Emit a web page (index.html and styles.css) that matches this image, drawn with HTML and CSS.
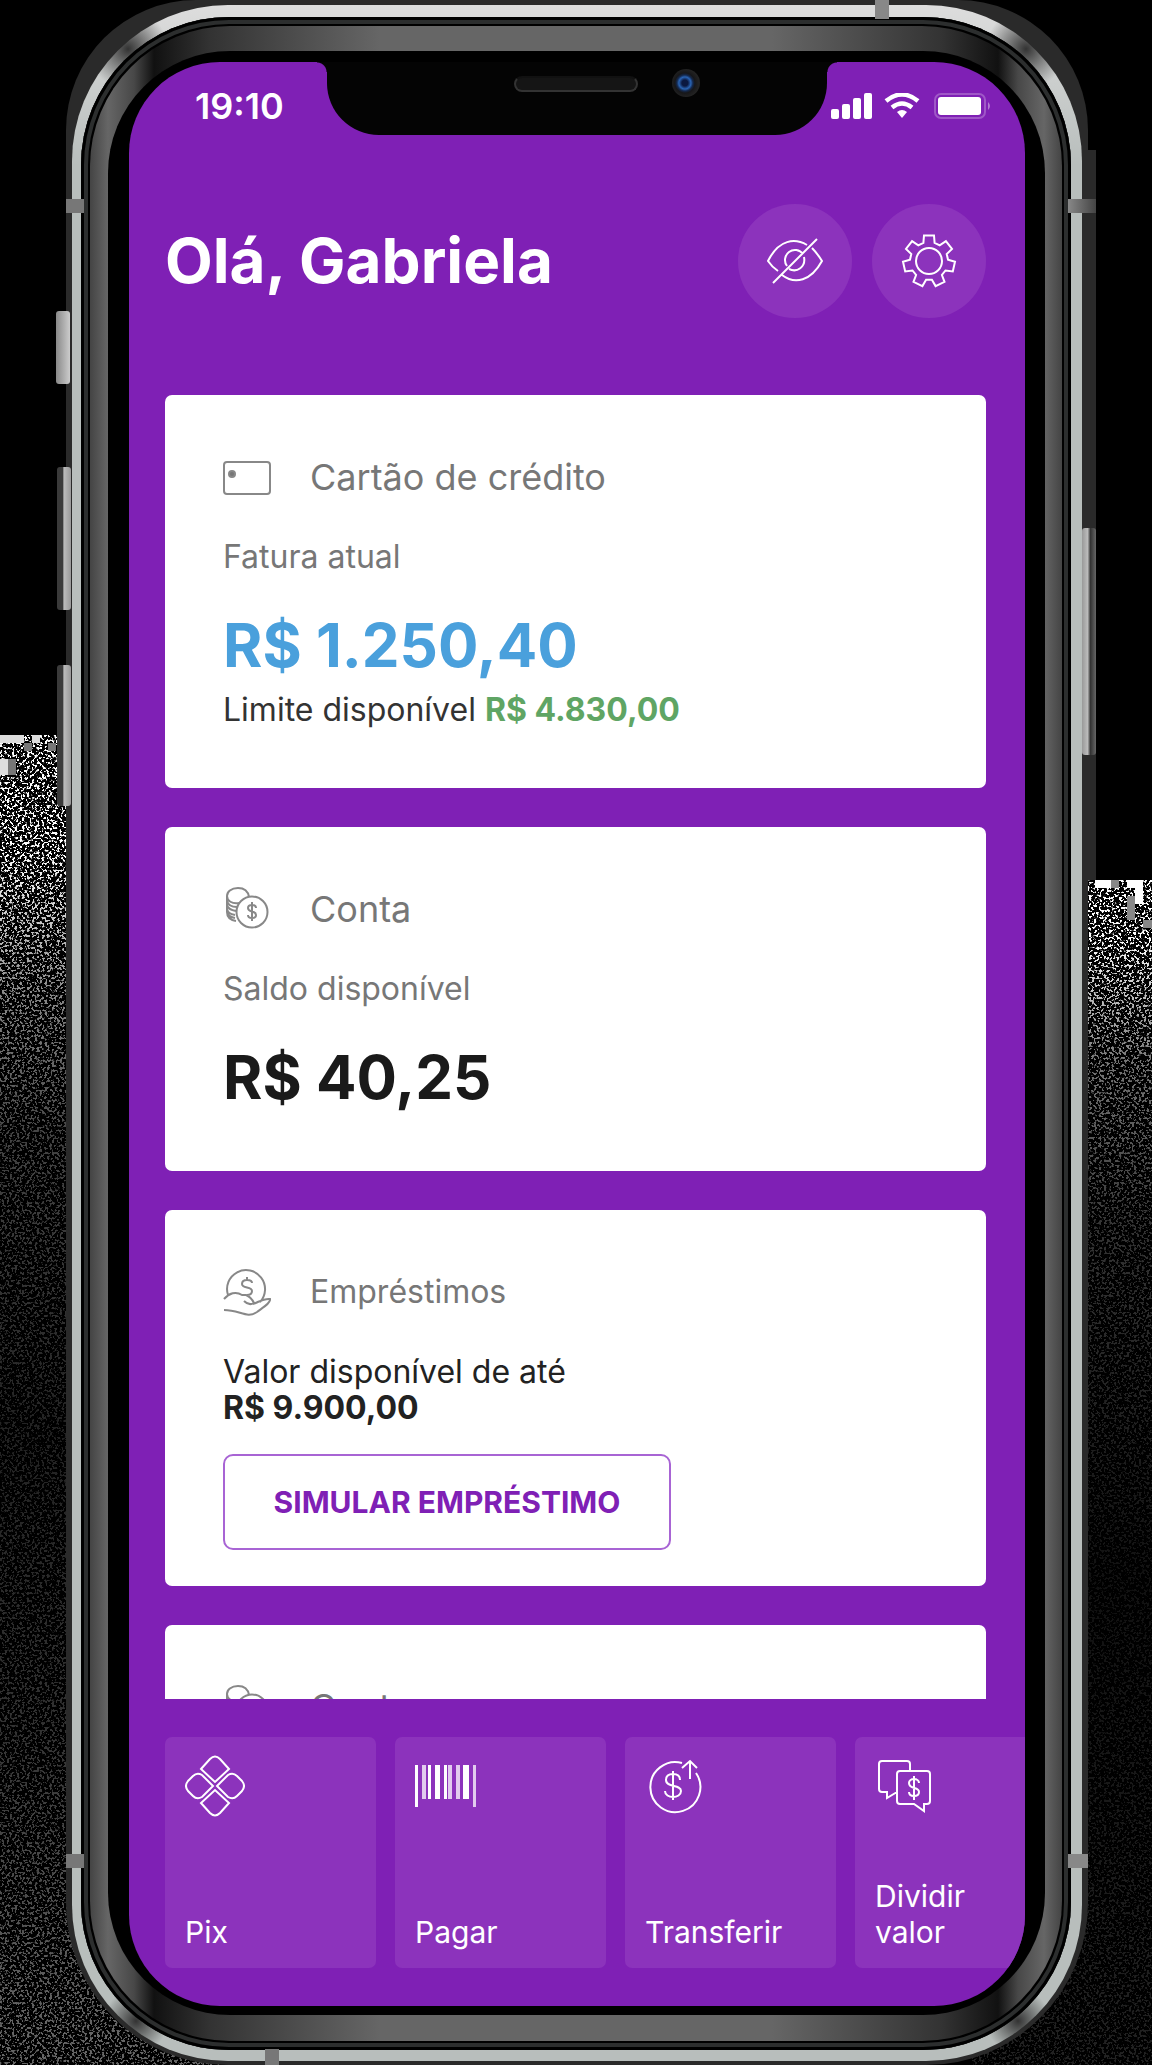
FILE: index.html
```html
<!DOCTYPE html>
<html lang="pt-BR">
<head>
<meta charset="utf-8">
<meta name="viewport" content="width=device-width, initial-scale=1">
<title>Olá, Gabriela</title>
<link rel="stylesheet" href="styles.css">
</head>
<body>
<svg class="defs" width="0" height="0" aria-hidden="true">
  <defs>
    <filter id="grain" x="0" y="0" width="100%" height="100%" color-interpolation-filters="sRGB">
      <feTurbulence type="fractalNoise" baseFrequency="0.4" numOctaves="2" seed="7"/>
      <feColorMatrix values="0 0 0 0 1  0 0 0 0 1  0 0 0 0 1  14 0 0 0 -7.4"/>
    </filter>
    <symbol id="coins" viewBox="0 0 48 48">
      <path d="M15 3C8 3 4 7 4 11v16c0 5 3 8 9 9M4 11c0 5 5 8 12 7M26 12c-1-6-5-9-11-9M4 16c1 4 4 6 10 6M4 20c1 4 4 5 9 6M4 24c1 4 3 5 8 6M4 28c1 2 3 4 8 5"/>
      <circle cx="29" cy="27" r="15.500"/>
      <path d="M33 23c0-2-2-3-4-3s-4 1-4 3c0 5 8 2 8 7 0 2-2 3-4 3s-4-1-4-3M29 17v19"/>
    </symbol>
  </defs>
</svg>
<svg class="noise noise-left" aria-hidden="true"><rect width="100%" height="100%" filter="url(#grain)"/><path fill="#ddd" d="M0 0h24v8H0zM0 24h8v16H0zM32 0h8v8h-8z"/><path fill="#777" d="M24 8h8v8h-8zM8 24h8v16H8zM48 8h8v8h-8z"/></svg>
<svg class="noise noise-right" aria-hidden="true"><rect width="100%" height="100%" filter="url(#grain)"/><path fill="#fff" d="M123 0h17v8h-17zM155 0h16v24h-8V8h-8z"/><path fill="#888" d="M139 0h8v8h-8zM155 16h8v24h-8zM171 40h9v8h-9z"/></svg>

<div class="phone">
  <i class="ledge"></i>
  <i class="key key-mute"></i><i class="key key-up"></i><i class="key key-down"></i><i class="key key-power"></i>
  <div class="steel">
    <div class="seam">
      <div class="rim">
        <div class="bezel">
          <main class="screen">
            <div class="notch"><i class="speaker"></i><i class="camera"></i></div>
            <div class="status">
              <span class="time">19:10</span>
              <svg class="signals" width="160" height="26" viewBox="0 0 160 26" aria-hidden="true">
                <g fill="#fff"><rect x="0" y="16" width="8" height="10" rx="2"/><rect x="11" y="11" width="8" height="15" rx="2"/><rect x="22" y="5" width="8" height="21" rx="2"/><rect x="33" y="0" width="8" height="26" rx="2"/>
                <path d="M66 19q5-4 10 0l-5 6z"/><rect x="107" y="4" width="43" height="18" rx="3"/></g>
                <g fill="none" stroke="#fff" stroke-width="4.500"><path d="M55 8q16-13 32 0M61 14.500q10-8 20 0"/></g>
                <rect x="104" y="1" width="50" height="24" rx="6" fill="none" stroke="#fff" stroke-width="2" opacity=".25"/>
                <path d="M157 9q4 4 0 8z" fill="#fff" opacity=".4"/>
              </svg>
            </div>
            <header class="hello">
              <h1>Olá, Gabriela</h1>
              <button class="round" type="button" aria-label="Ocultar valores">
                <svg width="56" height="48" viewBox="0 0 56 48"><path d="M11 34Q5 30 1 24C12 2 28 1 40 8M45 11q5 5 10 13C44 44 28 48 15 38M36 17a10 10 0 1 0-16 12M37 20c2 10-7 16-15 12M50 2 6 46"/></svg>
              </button>
              <button class="round" type="button" aria-label="Configurações">
                <svg id="gear" width="56" height="56" viewBox="-28 -28 56 56"><path d=""/><circle r="13"/></svg>
              </button>
            </header>

            <div class="cards">
              <section class="card">
                <h2 class="card-title"><svg width="48" height="48" viewBox="0 0 48 48"><rect x="1" y="9" width="46" height="32" rx="3"/><circle cx="9" cy="21" r="3" fill="#777"/></svg>Cartão de crédito</h2>
                <p class="label">Fatura atual</p>
                <p class="amount blue">R$ 1.250,40</p>
                <p class="line">Limite disponível <b class="green">R$ 4.830,00</b></p>
              </section>
              <section class="card">
                <h2 class="card-title"><svg width="48" height="48"><use href="#coins"/></svg>Conta</h2>
                <p class="label">Saldo disponível</p>
                <p class="amount">R$ 40,25</p>
              </section>
              <section class="card card-loan">
                <h2 class="card-title small"><svg width="48" height="48" viewBox="0 0 48 48"><path d="M5 27a19 19 0 1 1 32 7M1 31c5-6 12-8 18-4h4q5 2 8 8-5 3-10-2M30 36c6-2 11-6 17-5 1 4-8 9-13 13-10 7-17-2-33-2M29 15c0-2-2-3-5-3s-5 1-5 4c0 5 10 2 10 7 0 3-2 4-5 4M24 9v3"/></svg>Empréstimos</h2>
                <p class="loan">Valor disponível de até<br><b>R$ 9.900,00</b></p>
                <button class="simulate" type="button">SIMULAR EMPRÉSTIMO</button>
              </section>
              <section class="card card-peek">
                <h2 class="card-title"><svg width="48" height="48"><use href="#coins"/></svg>Conta</h2>
              </section>
            </div>

            <nav class="shortcuts" aria-label="Atalhos">
              <button type="button"><svg width="60" height="62" viewBox="0 0 60 62"><path d="M16 14 25 4q5-5 10 0l9 10-14 13zM16 48l9 10q5 5 10 0l9-10-14-13zM28 31 17 20q-5-3-9 1l-5 5q-4 5 0 10l5 5q4 4 9 1zM32 31l11-11q5-3 9 1l5 5q4 5 0 10l-5 5q-4 4-9 1z"/></svg><span>Pix</span></button>
              <button type="button"><svg width="62" height="62" viewBox="0 0 62 62" class="bars"><path d="M0 10h3v42H0zM13 10h3v34h-3zM20 10h5v34h-5zM29 10h3v34h-3zM48 10h6v34h-6z"/><path opacity=".75" d="M7 10h4v34H7zM33 10h4v34h-4zM41 10h4v34h-4zM58 10h3v42h-3z"/></svg><span>Pagar</span></button>
              <button type="button"><svg width="60" height="62" viewBox="0 0 60 62"><path d="M37 8A25 25 0 1 0 51 18M45 24V7M37 13l8-7 7 7M35 25c0-4-3-6-7-6s-7 2-7 6c0 8 15 4 15 11 0 4-4 6-8 6s-8-2-8-6M28 16v29"/></svg><span>Transferir</span></button>
              <button type="button"><svg width="60" height="62" viewBox="0 0 60 62"><path d="M22 37 12 43v-6H7q-3 0-3-3V9q0-3 3-3h25q3 0 3 3v7M22 19q0-3 3-3h27q3 0 3 3v27q0 3-3 3h-3v7l-10-7H25q-3 0-3-3zM44 28c0-2-2-4-5-4s-5 2-5 4c0 7 10 3 10 9 0 3-2 4-5 4s-5-1-5-4M39 21v24"/></svg><span>Dividir<br>valor</span></button>
            </nav>
          </main>
        </div>
      </div>
    </div>
  </div>
  <i class="band band-tl"></i><i class="band band-tr"></i><i class="band band-bl"></i><i class="band band-br"></i><i class="band band-top"></i><i class="band band-bottom"></i>
</div>
<script src="gear.js"></script>
</body>
</html>
```
FILE: gear.js
```js
// Builds the outline of the seven-toothed settings gear.
const teeth = 7;
const points = [];
for (let i = 0; i < teeth; i++) {
  const middle = (i / teeth) * 360 - 90;
  for (const [radius, offset] of [[19, -17], [26, -11], [26, 11], [19, 17]]) {
    const a = ((middle + offset) * Math.PI) / 180;
    points.push((radius * Math.cos(a)).toFixed(1) + " " + (radius * Math.sin(a)).toFixed(1));
  }
}
document.querySelector("#gear path").setAttribute("d", "M" + points.join("L") + "Z");
```
FILE: styles.css
```css
* { box-sizing: border-box; }
body {
  position: relative;
  margin: 0;
  background: #000;
  font-family: Inter, "Liberation Sans", sans-serif;
  overflow-x: hidden;
}
h1, h2, p { margin: 0; font-weight: 400; }
button { font: inherit; cursor: pointer; }
svg { fill: none; stroke-width: 2; flex: none; }
.defs, .noise, .ledge, .key, .band { position: absolute; }

/* grain behind the phone */
.noise-left {
  left: 0; top: 735px; width: 220px; height: calc(100% - 735px);
  mask-image: linear-gradient(#fff, #fff 120px, #fff8 260px, #fff4 400px, #fff2 700px, #fff3 1000px, #fff6 1300px);
}
.noise-right {
  right: 0; top: 880px; width: 180px; height: calc(100% - 880px);
  mask-image: linear-gradient(#fff, #fff 60px, #fff7 180px, #fff3 350px, #fff1 700px, #fff2);
}

/* phone body */
.phone {
  position: relative;
  margin: 0 64px 0 66px;
  padding: 5px 6px 4px;
  background: #2a2a2a;
  border-radius: 130px 130px 162px 162px;
}
.steel {
  padding: 12px 11px 11px 9px;
  border-radius: 156px;
  background:
    radial-gradient(circle at 56px 44px, #333, #3330 40px),
    radial-gradient(circle at calc(100% - 56px) 44px, #333, #3330 40px),
    radial-gradient(circle at 64px calc(100% - 40px), #333, #3330 32px),
    radial-gradient(circle at calc(100% - 64px) calc(100% - 40px), #333, #3330 32px),
    linear-gradient(#ddd, #b8bebc 160px);
}
.seam {
  padding: 9px;
  border-radius: 148px;
  background: #000;
  box-shadow: inset 0 0 0 3px #000, inset 0 0 0 7px #2c2e2e;
}
.rim {
  padding: 25px 17px 26px 18px;
  border-radius: 140px;
  background: linear-gradient(90deg, #444, #666 18px, #484848 44px, #111 64px, #333 120px, #666 290px, #666 calc(100% - 290px), #333 calc(100% - 120px), #111 calc(100% - 64px), #484848 calc(100% - 44px), #666 calc(100% - 18px), #444);
}
.bezel { padding: 11px 20px 9px 21px; border-radius: 122px; background: #000; }
.screen {
  position: relative;
  overflow: hidden;
  border-radius: 91px;
  background: #7f20b5;
  color: #fff;
}

/* frame details */
.ledge { right: -8px; top: 150px; width: 14px; height: 730px; background: #2a2a2a; }
.key { width: 14px; background: linear-gradient(90deg, #3a3a3a 40%, #bbb 50%, #999); border-radius: 3px; }
.key-mute { left: -10px; top: 311px; height: 73px; background: linear-gradient(90deg, #888, #ccc); }
.key-up { left: -9px; top: 467px; height: 143px; }
.key-down { left: -9px; top: 665px; height: 141px; }
.key-power { right: -8px; top: 528px; height: 227px; background: linear-gradient(90deg, #999, #bbb 40%, #333 60%, #666); }
.band { width: 18px; height: 14px; background: #777; }
.band-tl { left: 0; top: 199px; }
.band-bl { left: 0; bottom: 197px; }
.band-tr { right: -8px; top: 199px; width: 28px; background: linear-gradient(90deg, #888, #444); }
.band-br { right: 0; bottom: 197px; width: 20px; background: #888; }
.band-top { right: 199px; top: 0; width: 14px; height: 19px; background: #888; }
.band-bottom { left: 199px; bottom: 0; width: 14px; height: 16px; }

.notch {
  position: absolute;
  top: 0; left: 198px; right: 198px;
  height: 73px;
  background: #040404;
  border-radius: 0 0 52px 52px;
}
.notch::before, .notch::after {
  content: "";
  position: absolute;
  top: 0;
  width: 10px; height: 10px;
}
.notch::before { right: 100%; background: radial-gradient(circle at 0 100%, #0000 9px, #040404 10px); }
.notch::after { left: 100%; background: radial-gradient(circle at 100% 100%, #0000 9px, #040404 10px); }
.speaker { position: absolute; left: 187px; top: 14px; width: 124px; height: 16px; border-radius: 8px; background: #151515; border: 2px solid #333; border-top-color: #111; }
.camera { position: absolute; left: 345px; top: 7px; width: 28px; height: 28px; border-radius: 50%; background: radial-gradient(circle at 46% 50%, #0b1840 3px, #2a64b4 6px, #14284c 8px, #171719 10px, #222 14px); }

/* app */
.status { display: flex; align-items: center; justify-content: space-between; padding: 23px 34px 0 66px; height: 64px; }
.time { font-size: 36px; line-height: 36px; font-weight: 600; }
.hello { display: flex; align-items: center; gap: 20px; padding: 78px 39px 77px 36px; }
.hello h1 { flex: 1; font-size: 62px; line-height: 72px; font-weight: 700; white-space: nowrap; }
.round {
  display: grid; place-items: center;
  width: 114px; height: 114px;
  padding: 0; border: 0; border-radius: 50%;
  background: #8c33bc;
}
.round svg, .shortcuts svg { stroke: #fff; }

.cards { display: grid; gap: 39px; padding: 0 39px 0 36px; }
.card { padding: 50px 58px 62px; border-radius: 7px; background: #fff; color: #222; }
.card-title { display: flex; align-items: center; gap: 39px; height: 64px; margin-bottom: 30px; font-size: 36px; line-height: 44px; color: #777; }
.card-title svg { stroke: #888; }
.card-title.small, .label, .line, .loan { font-size: 32px; line-height: 36px; }
.label { color: #777; }
.amount { margin-top: 38px; font-size: 60px; line-height: 64px; font-weight: 700; color: #1a1a1a; }
.blue { color: #4aa0dc; }
.green { color: #5fa564; }
.line { margin: 15px 0 -2px; color: #333; }
.card-loan { padding-bottom: 36px; }
.simulate {
  display: block;
  width: 448px; height: 96px;
  margin-top: 28px; padding: 0;
  border: 2px solid #a864d4; border-radius: 10px;
  background: #fff;
  color: #7f20b5;
  font-size: 30px; font-weight: 700;
}
.card-peek { height: 74px; padding-bottom: 0; border-radius: 7px 7px 0 0; overflow: hidden; }

.shortcuts { display: flex; gap: 19px; padding: 38px 0 38px 36px; overflow: hidden; }
.shortcuts button {
  display: flex; flex-direction: column; align-items: flex-start; justify-content: space-between;
  flex: none;
  width: 211px; height: 231px;
  padding: 18px 20px;
  border: 0; border-radius: 7px;
  background: #8c33bc;
  color: #fff;
  font-size: 30px; line-height: 36px; text-align: left;
}
.shortcuts .bars { fill: #fff; stroke: none; }
```
